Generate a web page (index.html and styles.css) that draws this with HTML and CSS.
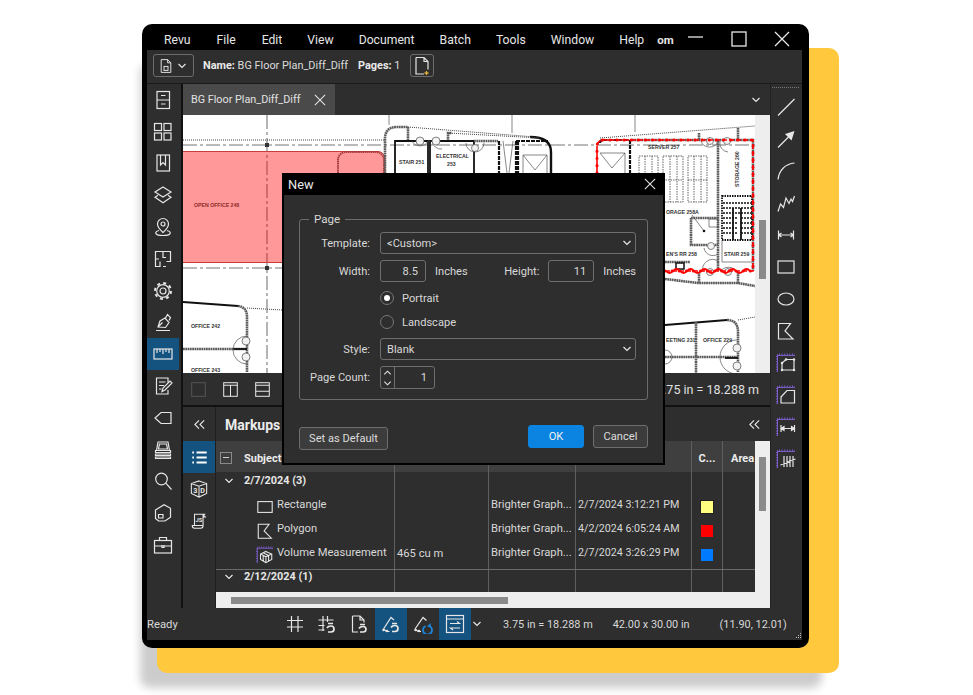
FILE: index.html
```html
<!DOCTYPE html>
<html lang="en">
<head>
<meta charset="utf-8">
<title>Revu - New document</title>
<link rel="stylesheet" href="styles.css">
</head>
<body>
<svg class="defs" width="0" height="0" aria-hidden="true">
  <symbol id="i-cabinet" viewBox="0 0 20 20"><rect x="4" y="1.500" width="12.500" height="17"/><path d="M4 10h12.500M8 5.500h4.500M8 14h4.500"/></symbol>
  <symbol id="i-grid4" viewBox="0 0 20 20"><rect x="1.500" y="1.500" width="7" height="7"/><rect x="11" y="1.500" width="7" height="7"/><rect x="1.500" y="11" width="7" height="7"/><rect x="11" y="11" width="7" height="7"/></symbol>
  <symbol id="i-book" viewBox="0 0 20 20"><rect x="4" y="2" width="12.500" height="16"/><path d="M7.500 2v10l2.500-2.500 2.500 2.500V2"/></symbol>
  <symbol id="i-layers" viewBox="0 0 20 20"><path d="M10 2l8 5-8 5-8-5z"/><path d="M5 10.200L2 12.200l8 5.500 8-5.500-3-2"/></symbol>
  <symbol id="i-pin" viewBox="0 0 20 20"><path d="M10 1.500A5.500 5.500 0 0 1 15.500 7c0 3.500-5.500 8.500-5.500 8.500S4.500 10.500 4.500 7A5.500 5.500 0 0 1 10 1.500z"/><circle cx="10" cy="7" r="2"/><path d="M6 13.500c-5.500 1.500-4 5 4 5s9.500-3.500 4-5"/></symbol>
  <symbol id="i-floor" viewBox="0 0 20 20"><path d="M10 2.500H2.500v15H7v-5M2.500 10H6M10 2.500h7.500v10h-4M10 2.500v6h3M10 17.500h3"/></symbol>
  <symbol id="i-gear" viewBox="0 0 20 20"><circle cx="10" cy="10" r="6.300"/><circle cx="10" cy="10" r="3"/><circle class="teeth" cx="10" cy="10" r="8"/></symbol>
  <symbol id="i-pen" viewBox="0 0 20 20"><path d="M3 18.500h14M5 15l2-6 5-3 4 4.500-3.500 5zM5 15l4.500-4.500M12.500 6l2-3.500 3 3-1.500 3"/></symbol>
  <symbol id="i-ruler" viewBox="0 0 20 20"><rect x="1" y="5" width="18" height="10"/><path d="M4 5v4M7 5v3M10 5v5M13 5v3M16 5v4"/></symbol>
  <symbol id="i-note" viewBox="0 0 20 20"><path d="M15 6.500V2H3.500v16H15v-4M6 6h6.500M6 9.500h5M6 13h2.500M9 15.500l1-3.500 7-7 2 2-7 7z"/></symbol>
  <symbol id="i-tag" viewBox="0 0 20 20"><path d="M18 4.500H8L2 10l6 5.500h10z"/></symbol>
  <symbol id="i-tray" viewBox="0 0 20 20"><path d="M3.500 10.500L5 2h10l1.500 8.500M6.500 4h7l1 5h-9zM2.500 10.500h15v2h-15zM2.500 14h15v1.500h-15zM2.500 17h15v1.500h-15z"/></symbol>
  <symbol id="i-search" viewBox="0 0 20 20"><circle cx="8.500" cy="8" r="5.800"/><path d="M12.800 12.200L18.500 18.500"/></symbol>
  <symbol id="i-house" viewBox="0 0 20 20"><path d="M2.500 7L11 1.800l6.500 3.500v9L12 18H5.500l-3-2.500zM5.500 15v-3.500H10V15z"/></symbol>
  <symbol id="i-case" viewBox="0 0 20 20"><rect x="1.500" y="5.500" width="17" height="12.500"/><path d="M6.500 5.500V2.500h7v3M1.500 11h17M9 10v2.500h2V10"/></symbol>

  <symbol id="t-line" viewBox="0 0 20 20"><path d="M2 18.500L18.500 2"/></symbol>
  <symbol id="t-arrow" viewBox="0 0 20 20"><path d="M2 18.500L15 5.500"/><path class="fillhead" d="M18.500 2l-3 9.500-6.500-6.500z"/></symbol>
  <symbol id="t-arc" viewBox="0 0 20 20"><path d="M2 18.500C3 9.500 9 3 18.500 2"/></symbol>
  <symbol id="t-zig" viewBox="0 0 20 20"><path d="M2 18.500l2.500-7.500 3 3.500L10 5l3 5.500L15 6l1.500 2.500L18.500 3"/></symbol>
  <symbol id="t-dim" viewBox="0 0 20 20"><path d="M2.500 5.500v9M17.500 5.500v9M2.500 10h15M2.500 10l3-2M2.500 10l3 2M17.500 10l-3-2M17.500 10l-3 2"/></symbol>
  <symbol id="t-rect" viewBox="0 0 20 20"><rect x="2" y="4" width="16" height="12"/></symbol>
  <symbol id="t-ellipse" viewBox="0 0 20 20"><ellipse cx="10" cy="10" rx="8" ry="6"/></symbol>
  <symbol id="t-poly" viewBox="0 0 20 20"><path d="M2.500 2.500h12L9 10l8 8H2.500z"/></symbol>
  <symbol id="t-mpoly" viewBox="0 0 20 20"><path class="violet" d="M1.500 1v18M1.500 2.500H19"/><path class="ticks" d="M3 1.500H19M.8 3v16"/><path d="M6 10l4-3.500h8V17H6z"/><path class="nodes" d="M6 10v.01M10 6.500v.01M18 6.500v.01M18 17v.01M6 17v.01"/></symbol>
  <symbol id="t-marea" viewBox="0 0 20 20"><path class="violet" d="M1.500 1v18M1.500 2.500H19"/><path class="ticks" d="M3 1.500H19M.8 3v16"/><path d="M5 12l6-6.500h7.500V18H5z"/></symbol>
  <symbol id="t-mlen" viewBox="0 0 20 20"><path class="violet" d="M1.500 1v18M1.500 2.500H19"/><path class="ticks" d="M3 1.500H19M.8 3v16"/><path d="M5 8v7M18.500 8v7M5 11.500h13.500M5 11.500l3-2v4zM18.500 11.500l-3-2v4z"/></symbol>
  <symbol id="t-mtally" viewBox="0 0 20 20"><path class="violet" d="M1.500 1v18M1.500 2.500H19"/><path class="ticks" d="M3 1.500H19M.8 3v16"/><path d="M8 7v11M11 7v11M14 7v11M17 7v11M4.500 16l15-6"/></symbol>

  <symbol id="p-cube" viewBox="0 0 20 20"><path d="M10 1L18.500 4v11L10 19 1.500 15V4zM1.500 4L10 7l8.500-3M10 7v12"/></symbol>
  <symbol id="p-list" viewBox="0 0 20 20"><path class="thicker" d="M6.500 4H18.500M6.500 10H18.500M6.500 16H18.500"/><path class="thicker" d="M1.500 4h2M1.500 10h2M1.500 16h2"/></symbol>
  <symbol id="p-script" viewBox="0 0 20 20"><path d="M5 15V2.500h12M17 2.500c-2 0-2 3 0 3M14.500 2.500V15M5 15H2.500c0 2.500 1 3 2.500 3h7c1.500 0 2.500-.5 2.500-3zM14.500 5.500H18"/></symbol>

  <symbol id="s-grid" viewBox="0 0 20 20"><path d="M6.500 2v16M13 2v16M2 6.500h16M2 13h16"/></symbol>
  <symbol id="s-gridu" viewBox="0 0 20 20"><path d="M6 2v15M10.500 2v6M1.500 6h15M1.500 11.500h6M1.500 16h6"/><path class="thick" d="M11 9.500h5M10 14c1-2 2.500-2 4-2 4 0 4 6 0 6h-3"/></symbol>
  <symbol id="s-docu" viewBox="0 0 20 20"><path d="M3.500 2H11l4 4v2.500M3.500 2v16H9M11 2v4h4"/><path class="thick" d="M11 10.500h5M10 14.500c1-2 2.500-2 4-2 4 0 4 5.500 0 5.500h-3"/></symbol>
  <symbol id="s-penu" viewBox="0 0 20 20"><path d="M2.500 15L10 3.500l3 2.500M2.500 15l3 2.500h3"/><path class="nodes" d="M2.500 16v.01M6 17v.01"/><path class="thick" d="M11 9.500h5M10 13.500c1-2 2.500-2 4-2 4 0 4 6 0 6h-3"/></symbol>
  <symbol id="s-penr" viewBox="0 0 20 20"><path d="M2 15L10 3.500l3.500 3M2 15l3 2.500h3"/><path class="nodes" d="M2.500 16v.01M6 17v.01"/><path class="bluearc" d="M16.500 12a4.500 4.500 0 1 1-4 0"/><path class="bluehead" d="M17.500 9l.5 4.500-4-1z"/></symbol>
  <symbol id="s-swap" viewBox="0 0 20 20"><rect x="1.500" y="1.500" width="17" height="17"/><path d="M1.500 5h17M5 9.500h9.500l-2.500-2M15 14H5.500l2.500 2"/></symbol>

  <symbol id="c-down" viewBox="0 0 10 10"><path d="M1.500 3L5 6.500 8.500 3"/></symbol>
  <symbol id="c-up" viewBox="0 0 10 10"><path d="M1.500 7L5 3.500 8.500 7"/></symbol>
  <symbol id="c-close" viewBox="0 0 14 14"><path d="M1 1l12 12M13 1L1 13"/></symbol>
  <symbol id="c-back" viewBox="0 0 14 14"><path d="M6.500 2.500L2 7l4.500 4.500M12 2.500L7.500 7l4.500 4.500"/></symbol>
</svg>

<main class="stage">
  <div class="backplate"></div>
  <section class="window">
    <header class="titlebar">
      <nav class="menu">
        <span>Revu</span><span class="menu-shift">File</span><span class="menu-shift">Edit</span><span>View</span><span>Document</span><span>Batch</span><span>Tools</span><span>Window</span><span class="menu-help">Help</span><span class="menu-om">om</span>
      </nav>
      <div class="winctrls">
        <svg class="ctl" viewBox="0 0 16 16"><path d="M0 6h15"/></svg>
        <svg class="ctl" viewBox="0 0 16 16"><rect x="1" y="1" width="14" height="14"/></svg>
        <svg class="ctl" viewBox="0 0 16 16"><path d="M1 1l14 14M15 1L1 15"/></svg>
      </div>
    </header>

    <div class="toolbar">
      <button class="tbtn tbtn-drop">
        <svg class="ico i16" viewBox="0 0 20 20"><path d="M4 2h8l4 4v12H4zM12 2v4h4"/><rect x="7.500" y="10.500" width="5" height="5"/></svg>
        <svg class="ico i10"><use href="#c-down"/></svg>
      </button>
      <span class="docinfo"><b>Name:</b> BG Floor Plan_Diff_Diff</span>
      <span class="docinfo pages"><b>Pages:</b> 1</span>
      <button class="tbtn tbtn-new">
        <svg class="ico i20" viewBox="0 0 20 20"><path d="M4 1.500h8l4 4v8M4 1.500V18h8M12 1.500v4h4"/><path class="plus" d="M14.500 15v4M12.500 17h4"/></svg>
      </button>
    </div>

    <div class="main">
      <aside class="rail">
        <span class="rail-item"><svg class="ico"><use href="#i-cabinet"/></svg></span>
        <span class="rail-item"><svg class="ico"><use href="#i-grid4"/></svg></span>
        <span class="rail-item"><svg class="ico"><use href="#i-book"/></svg></span>
        <span class="rail-item"><svg class="ico"><use href="#i-layers"/></svg></span>
        <span class="rail-item"><svg class="ico"><use href="#i-pin"/></svg></span>
        <span class="rail-item"><svg class="ico"><use href="#i-floor"/></svg></span>
        <span class="rail-item"><svg class="ico"><use href="#i-gear"/></svg></span>
        <span class="rail-item"><svg class="ico"><use href="#i-pen"/></svg></span>
        <span class="rail-item is-active"><svg class="ico"><use href="#i-ruler"/></svg></span>
        <span class="rail-item"><svg class="ico"><use href="#i-note"/></svg></span>
        <span class="rail-item"><svg class="ico"><use href="#i-tag"/></svg></span>
        <span class="rail-item"><svg class="ico"><use href="#i-tray"/></svg></span>
        <span class="rail-item"><svg class="ico"><use href="#i-search"/></svg></span>
        <span class="rail-item"><svg class="ico"><use href="#i-house"/></svg></span>
        <span class="rail-item"><svg class="ico"><use href="#i-case"/></svg></span>
      </aside>

      <div class="center">
        <div class="tabbar">
          <div class="tab">BG Floor Plan_Diff_Diff <svg class="ico tabx"><use href="#c-close"/></svg></div>
          <svg class="ico i10 tabmore"><use href="#c-down"/></svg>
        </div>

        <div class="viewer">
          <svg class="plan" viewBox="183 115 572 258" width="572" height="258">
            <rect x="183" y="115" width="572" height="258" fill="#fff"/>
            <g class="grid-l">
              <path d="M267 115V373"/>
              <path d="M183 145H755"/>
              <path d="M183 268H282"/>
            </g>
            <path class="thin" d="M389 115v10M512 115v18M635 115v17"/>
            <path class="dots" d="M183 140H385M247 308L282 310"/>
            <rect x="265" y="143" width="4" height="4" fill="#333"/>
            <rect x="265" y="266" width="4" height="4" fill="#333"/>
            <path class="pink" d="M183 152H377a8 8 0 0 1 8 8V262H183z"/>
            <path class="pinkline" d="M183 151.500H378a7 7 0 0 1 7 7V173M183 262.500H282"/>
            <path class="pinkwall" d="M338 173V160a8 8 0 0 1 8-8H376a8 8 0 0 1 8 8V173"/>
            <text class="lbl pinklbl" x="194" y="207">OPEN OFFICE 248</text>

            <path class="wall" d="M385 173V139Q385 127 397 127H408V141M448 141V133H452"/>
            <path class="dots" d="M408 127L535 137"/>
            <path class="wallb" d="M530 137Q551 137 551 152V173"/>
            <path class="dots" d="M448 133L540 138"/>
            <path class="blk" d="M395 173V141H428V173M430 173V141H474V173"/>
            <path class="wall" d="M474 141H498"/>
            <path class="blk2" d="M499 141V173M516 141V173M518 141V173M516 141H548"/>
            <path class="thin" d="M503 141L507 173M513 141L509 173M523 155H547V173M523 155V173M523 155L535 170M547 155L535 170"/>
            <path class="thin" d="M412 141a9 9 0 0 0 16 0M432 141a9 9 0 0 0 10 8M466 143a9 9 0 0 0 18 0"/>
            <circle class="door" cx="420" cy="141" r="4"/><circle class="door" cx="436" cy="141" r="4"/><circle class="door" cx="475" cy="148" r="3.500"/>
            <text class="lbl" x="399" y="164">STAIR 251</text>
            <text class="lbl" x="436" y="158">ELECTRICAL</text>
            <text class="lbl" x="447" y="166">253</text>

            <path class="dots" d="M600 138L755 126"/>
            <path class="wall" d="M699 133V139M738 128V139"/>
            <path class="blk2" d="M600 143Q600 140 604 140H629M630 140V173"/>
            <path class="thin" d="M600 153H625V173M600 153L612 168M625 153L612 168"/>
            <path class="wall" d="M632 140H753V271M718 141V262M691 218H718M691 218V245H718"/>
            <path class="dotbox" d="M639 156h19v46h-19zM645 156v46M652 156v46M639 180h19M663 156h20v46h-20zM670 156v46M677 156v46M663 180h20M688 156h19v46h-19zM694 156v46M701 156v46M688 180h19"/>
            <text class="lbl" x="648" y="149">SERVER 257</text>
            <text class="lbl" x="666" y="214">ORAGE 258A</text>
            <text class="lbl" x="666" y="256">EN'S RR 258</text>
            <text class="lbl" x="724" y="256">STAIR 259</text>
            <text class="lbl" transform="translate(739 187) rotate(-90)">STORAGE 260</text>
            <path class="thin" d="M701 141a9 9 0 0 0 17 0M720 141a9 9 0 0 0 8 11"/>
            <circle class="door" cx="710" cy="141" r="3.500"/><circle class="door" cx="727" cy="141" r="3.500"/>
            <path class="stairbox" d="M722 196H752V240H722z"/>
            <path class="treads" d="M723 203h29M723 208h29M723 213h29M723 218h14M723 223h14M723 228h14M723 233h14M741 218h11M741 223h11M741 228h11M741 233h11"/>
            <path class="blk" d="M733 208V240M741 208V240"/>
            <path class="thin" d="M722 240V262H752M692 215L704 231M709 219h9v8h-9z"/>
            <circle cx="704" cy="231" r="1.300" fill="#111"/>
            <path class="wall" d="M718 262V271M665 262H690"/>
            <rect x="676" y="263" width="8" height="6" class="office-box"/>
            <path class="thin" d="M703 272a10 10 0 0 1 15 -11M720 272a10 10 0 0 1 17 0M704 248a9 9 0 0 0 14 6"/>
            <circle class="door" cx="711" cy="246" r="3.500"/><circle class="door" cx="710" cy="272" r="3.500"/><circle class="door" cx="728" cy="272" r="3.500"/>
            <path class="wall" d="M665 279L698 283H738L755 286M699 272V283M738 272V284"/>
            <path class="cloud-line" d="M665 271H753V140H604Q597 140 597 147V173"/>
            <path class="cloud-dots" d="M665 271H753V140H604Q597 140 597 147V173"/>
            <path class="cloud-arcs" d="M666 271q3.500 4 7 0t7 0t7 0t7 0t7 0t7 0t7 0t7 0t7 0t7 0t7 0t7 0"/>

            <path class="blk" d="M665 325L727 320"/>
            <path class="wall" d="M727 320Q738 320 738 332V372M665 357H738M696 322V373"/>
            <path class="dots" d="M738 320L755 317"/>
            <path class="blk" d="M725 358H738"/>
            <path class="thin" d="M737 340a17 17 0 0 0 0 34"/>
            <circle class="door" cx="737" cy="348" r="4"/><circle class="door" cx="737" cy="366" r="4"/>
            <text class="lbl" x="666" y="342">EETING 231</text>
            <text class="lbl" x="703" y="342">OFFICE 229</text>
            <path class="thin" d="M665 350a6 6 0 0 1 0 14"/>

            <path class="blk" d="M183 302L238 306"/>
            <path class="wall" d="M238 306Q247 307 247 317V372"/>
            <path class="wall" d="M183 349H247"/>
            <path class="blk" d="M233 349H247"/>
            <path class="thin" d="M247 336a14 14 0 0 0 0 28"/>
            <circle class="door" cx="246" cy="341" r="4"/><circle class="door" cx="246" cy="357" r="4"/>
            <text class="lbl" x="191" y="328">OFFICE 242</text>
            <text class="lbl" x="191" y="372">OFFICE 243</text>
          </svg>
          <div class="vscroll"><span class="vthumb vthumb-plan"></span></div>
        </div>

        <div class="viewbar">
          <div class="viewbar-icons">
            <svg class="ico i17 dim" viewBox="0 0 20 20"><rect x="2" y="2" width="16" height="16"/></svg>
            <svg class="ico i17" viewBox="0 0 20 20"><rect x="2" y="2" width="16" height="16"/><path d="M2 5h16M10 5v13"/></svg>
            <svg class="ico i17" viewBox="0 0 20 20"><rect x="2" y="2" width="16" height="16"/><path d="M2 5h16M2 12h16"/></svg>
          </div>
          <span class="scale">3.75 in = 18.288 m</span>
        </div>

        <div class="panel">
          <div class="panel-side">
            <span class="side-top"><svg class="ico i13"><use href="#c-back"/></svg></span>
            <span class="side-item is-active"><svg class="ico i17"><use href="#p-list"/></svg></span>
            <span class="side-item">
              <svg class="ico i18" viewBox="0 0 20 20"><use href="#p-cube"/><text class="icontext" x="3.500" y="14.500">3</text><text class="icontext" x="11.500" y="14.500">D</text></svg>
            </span>
            <span class="side-item">
              <svg class="ico i18" viewBox="0 0 20 20"><use href="#p-script"/><text class="icontext small" x="6" y="11.500">JS</text></svg>
            </span>
          </div>
          <div class="panel-main">
            <div class="panel-head">
              <span class="panel-title">Markups</span>
              <svg class="ico i13"><use href="#c-back"/></svg>
            </div>
            <div class="table-area">
              <div class="table-and-v">
                <div class="table">
                  <div class="trow thead">
                    <div class="cell cell-subject"><span class="minus"></span><b>Subject</b></div>
                    <div class="cell"></div><div class="cell"></div><div class="cell"></div>
                    <div class="cell center-t"><b>C...</b></div>
                    <div class="cell cell-last"><b>Area</b></div>
                  </div>
                  <div class="trow tgroup">
                    <div class="cell cell-group"><svg class="ico i10"><use href="#c-down"/></svg><b>2/7/2024 (3)</b></div>
                    <div class="cell"></div><div class="cell"></div><div class="cell"></div><div class="cell"></div><div class="cell cell-last"></div>
                  </div>
                  <div class="trow titem">
                    <div class="cell cell-name"><svg class="ico i18"><use href="#t-rect"/></svg><span>Rectangle</span></div>
                    <div class="cell"></div>
                    <div class="cell">Brighter Graph...</div>
                    <div class="cell cell-date">2/7/2024 3:12:21 PM</div>
                    <div class="cell center-t"><span class="swatch swatch-yellow"></span></div>
                    <div class="cell cell-last"></div>
                  </div>
                  <div class="trow titem">
                    <div class="cell cell-name"><svg class="ico i18"><use href="#t-poly"/></svg><span>Polygon</span></div>
                    <div class="cell"></div>
                    <div class="cell">Brighter Graph...</div>
                    <div class="cell cell-date">4/2/2024 6:05:24 AM</div>
                    <div class="cell center-t"><span class="swatch swatch-red"></span></div>
                    <div class="cell cell-last"></div>
                  </div>
                  <div class="trow titem">
                    <div class="cell cell-name">
                      <svg class="ico i18" viewBox="0 0 20 20"><path class="violet" d="M1.500 1v18M1.500 2.500H19"/><path class="ticks" d="M3 1.500H19M.8 3v16"/><path d="M11 6l6.500 3v6L11 18.500 5 15V9zM5 9l6 3 6.500-3M11 12v6.500M8 7.500l6 3M8 16.800V10.500M14 16.800v-6"/></svg>
                      <span>Volume Measurement</span>
                    </div>
                    <div class="cell cell-value">465 cu m</div>
                    <div class="cell">Brighter Graph...</div>
                    <div class="cell cell-date">2/7/2024 3:26:29 PM</div>
                    <div class="cell center-t"><span class="swatch swatch-blue"></span></div>
                    <div class="cell cell-last"></div>
                  </div>
                  <div class="trow tspacer">
                    <div class="cell"></div><div class="cell"></div><div class="cell"></div><div class="cell"></div><div class="cell"></div><div class="cell cell-last"></div>
                  </div>
                  <div class="trow tgroup tgroup-last">
                    <div class="cell cell-group"><svg class="ico i10"><use href="#c-down"/></svg><b>2/12/2024 (1)</b></div>
                    <div class="cell"></div><div class="cell"></div><div class="cell"></div><div class="cell"></div><div class="cell cell-last"></div>
                  </div>
                </div>
                <div class="vscroll vscroll-table"><span class="vthumb vthumb-table"></span></div>
              </div>
              <div class="hscroll"><span class="hthumb"></span></div>
            </div>
          </div>
        </div>
      </div>

      <aside class="tools">
        <span class="tools-grip"></span>
        <span class="tool"><svg class="ico"><use href="#t-line"/></svg></span>
        <span class="tool"><svg class="ico"><use href="#t-arrow"/></svg></span>
        <span class="tool"><svg class="ico"><use href="#t-arc"/></svg></span>
        <span class="tool"><svg class="ico"><use href="#t-zig"/></svg></span>
        <span class="tool"><svg class="ico"><use href="#t-dim"/></svg></span>
        <span class="tool"><svg class="ico"><use href="#t-rect"/></svg></span>
        <span class="tool"><svg class="ico"><use href="#t-ellipse"/></svg></span>
        <span class="tool"><svg class="ico"><use href="#t-poly"/></svg></span>
        <span class="tool"><svg class="ico"><use href="#t-mpoly"/></svg></span>
        <span class="tool"><svg class="ico"><use href="#t-marea"/></svg></span>
        <span class="tool"><svg class="ico"><use href="#t-mlen"/></svg></span>
        <span class="tool"><svg class="ico"><use href="#t-mtally"/></svg></span>
      </aside>
    </div>

    <footer class="status">
      <span class="ready">Ready</span>
      <div class="status-tools">
        <span class="st"><svg class="ico"><use href="#s-grid"/></svg></span>
        <span class="st"><svg class="ico"><use href="#s-gridu"/></svg></span>
        <span class="st"><svg class="ico"><use href="#s-docu"/></svg></span>
        <span class="st is-active"><svg class="ico"><use href="#s-penu"/></svg></span>
        <span class="st"><svg class="ico"><use href="#s-penr"/></svg></span>
        <span class="st is-active"><svg class="ico"><use href="#s-swap"/></svg></span>
        <svg class="ico i10 st-more"><use href="#c-down"/></svg>
      </div>
      <span class="stat stat-scale">3.75 in = 18.288 m</span>
      <span class="stat stat-size">42.00 x 30.00 in</span>
      <span class="stat stat-pos">(11.90, 12.01)</span>
      <svg class="grip" viewBox="0 0 8 8"><path d="M6 1h1v1H6zM4 3h1v1H4zM6 3h1v1H6zM2 5h1v1H2zM4 5h1v1H4zM6 5h1v1H6z"/></svg>
    </footer>

    <div class="dialog" role="dialog">
      <div class="dlg-title"><span>New</span><svg class="ico dlg-x"><use href="#c-close"/></svg></div>
      <div class="dlg-body">
        <div class="group">
          <span class="legend">Page</span>
          <div class="row">
            <label class="lab">Template:</label>
            <div class="select"><span>&lt;Custom&gt;</span><svg class="ico i10"><use href="#c-down"/></svg></div>
          </div>
          <div class="row">
            <label class="lab">Width:</label>
            <div class="input">8.5</div>
            <span class="unit">Inches</span>
            <label class="lab lab-h">Height:</label>
            <div class="input">11</div>
            <span class="unit">Inches</span>
          </div>
          <div class="row radio-row radio-first">
            <span class="radio is-on"></span><span>Portrait</span>
          </div>
          <div class="row radio-row radio-second">
            <span class="radio"></span><span>Landscape</span>
          </div>
          <div class="row">
            <label class="lab">Style:</label>
            <div class="select"><span>Blank</span><svg class="ico i10"><use href="#c-down"/></svg></div>
          </div>
          <div class="row row-last">
            <label class="lab">Page Count:</label>
            <div class="spin">
              <div class="spin-btns">
                <svg class="ico"><use href="#c-up"/></svg>
                <svg class="ico"><use href="#c-down"/></svg>
              </div>
              <span class="spin-val">1</span>
            </div>
          </div>
        </div>
        <div class="dlg-foot">
          <button class="btn btn-default">Set as Default</button>
          <button class="btn btn-ok">OK</button>
          <button class="btn btn-cancel">Cancel</button>
        </div>
      </div>
    </div>
  </section>
</main>
</body>
</html>
```

FILE: styles.css
```css
* { box-sizing: border-box; }
html, body { margin: 0; padding: 0; background: #fff; }
body { font-family: Roboto, "Liberation Sans", sans-serif; font-size: 11.200px; color: #dcdcdc; overflow: hidden; }
.defs { position: absolute; }
.stage { position: relative; width: 973px; height: 695px; padding: 24px 0 0 142px; }
.backplate {
  position: absolute; left: 157px; top: 48px; width: 682px; height: 625px;
  background: #ffc83d; border-radius: 10px;
  box-shadow: -17px 15px 8px rgba(0,0,0,.2);
}

/* icons */
.ico { width: 20px; height: 20px; fill: none; stroke: #e6e6e6; stroke-width: 1.200; display: block; flex: none; }
.i10 { width: 10px; height: 10px; }
.i13 { width: 13px; height: 13px; }
.i16 { width: 16px; height: 16px; }
.i17 { width: 17px; height: 17px; }
.i18 { width: 18px; height: 18px; }
.i20 { width: 20px; height: 20px; }
.dim { stroke: #555; }
.teeth { stroke-width: 2; stroke-dasharray: 3 3.280; }
.fillhead { fill: #e6e6e6; stroke: none; }
.thick { stroke-width: 1.700; }
.thicker { stroke-width: 2.300; stroke: #fff; }
.nodes { stroke-width: 2.500; stroke-linecap: round; }
.violet { stroke: #7a5cc8; stroke-width: 1; }
.ticks { stroke: #7a5cc8; stroke-width: 2; stroke-dasharray: 1 1.600; }
.plus { stroke: #e0b23a; stroke-width: 1.300; }
.bluearc { stroke: #1c86dc; stroke-width: 1.800; }
.bluehead { fill: #1c86dc; stroke: none; }
.icontext { font: 700 8px Roboto, sans-serif; fill: #e6e6e6; stroke: none; }
.icontext.small { font-size: 6.500px; }

/* window */
.window {
  position: relative; width: 667px; height: 624px;
  background: #000; border-radius: 10px; padding: 0 7px 8px 5px;
  display: flex; flex-direction: column;
}
.titlebar { height: 26px; display: flex; align-items: center; justify-content: space-between; flex: none; }
.menu { display: flex; padding-left: 17px; gap: 25px; font-size: 12.200px; color: #e6e6e6; padding-top: 5px; }
.menu-shift { margin-left: 1px; }
.menu-om { margin-left: -12px; font-weight: 700; font-size: 11.500px; }
.winctrls { display: flex; gap: 27px; margin-right: 12px; margin-top: 4px; }
.ctl { width: 16px; height: 16px; fill: none; stroke: #e8e8e8; stroke-width: 1.300; display: block; }

.toolbar {
  height: 34px; flex: none; background: #2e2e2e; border-bottom: 1px solid #1a1a1a;
  display: flex; align-items: center; padding: 0 0 2px 6px; font-size: 10.900px;
}
.tbtn { background: transparent; border: 1px solid #6c6c6c; border-radius: 3px; height: 23px; padding: 0; display: flex; align-items: center; }
.tbtn-drop { width: 41px; justify-content: space-between; padding: 0 6px 0 4px; }
.tbtn-new { width: 24px; justify-content: center; margin-left: 10px; }
.docinfo { margin-left: 9px; white-space: nowrap; color: #dcdcdc; }
.docinfo b { color: #eaeaea; }
.pages { margin-left: 10px; }

.main { flex: none; height: 524px; display: flex; background: #2e2e2e; }
.rail { width: 36px; flex: none; border-right: 2px solid #111; display: flex; flex-direction: column; }
.rail-item { height: 31.800px; width: 32px; display: flex; align-items: center; justify-content: center; }
.rail-item.is-active { background: #14527f; }

.center { width: 587px; flex: none; display: flex; flex-direction: column; }
.tabbar { height: 31px; flex: none; display: flex; align-items: center; justify-content: space-between; padding-right: 9px; }
.tab {
  width: 152px; height: 31px; background: #4a4a4a; display: flex; align-items: center;
  justify-content: space-between; padding: 0 9px 0 8px; font-size: 10.800px; color: #e2e2e2; white-space: nowrap;
}
.tabx { width: 12px; height: 12px; }

.viewer { height: 258px; flex: none; display: flex; }
.plan { display: block; flex: none; }
.vscroll { width: 15px; flex: none; background: #eeeeee; position: relative; }
.vthumb { position: absolute; left: 4px; width: 7px; background: #8a8a8a; }
.vthumb-plan { top: 105px; height: 59px; }
.vthumb-table { top: 16px; height: 54px; }

/* plan drawing */
.plan .grid-l path { fill: none; stroke: #777; stroke-width: 1.100; stroke-dasharray: 14 3 3 3; }
.plan .thin { fill: none; stroke: #555; stroke-width: .7; }
.plan .dots { fill: none; stroke: #444; stroke-width: 1; stroke-dasharray: 1 1; }
.plan .pink { fill: #ff0000; fill-opacity: .4; }
.plan .pinkline { fill: none; stroke: #c83c3c; stroke-width: 1; }
.plan .pinkwall { fill: none; stroke: #a83a3a; stroke-width: 2; stroke-dasharray: 1.500 .6; }
.plan .wall { fill: none; stroke: #5c5c5c; stroke-width: 2.600; stroke-dasharray: 1.800 .5; }
.plan .wallb { fill: none; stroke: #111; stroke-width: 2.400; }
.plan .blk { fill: none; stroke: #111; stroke-width: 1.800; }
.plan .blk2 { fill: none; stroke: #111; stroke-width: 2.200; stroke-dasharray: 4 1; }
.plan .door { fill: #f2f2f2; stroke: #666; stroke-width: .8; }
.plan .dotbox { fill: none; stroke: #555; stroke-width: .9; stroke-dasharray: 1.500 1; }
.plan .stairbox { fill: none; stroke: #111; stroke-width: 1.800; stroke-dasharray: 1.500 1; }
.plan .treads { fill: none; stroke: #111; stroke-width: 1.600; stroke-dasharray: 2 1; }
.plan .office-box { fill: #fff; stroke: #111; stroke-width: 1.500; }
.plan .cloud-line { fill: none; stroke: #ff0000; stroke-width: 1.600; stroke-dasharray: 5 2; }
.plan .cloud-dots { fill: none; stroke: #ff0000; stroke-width: 3; stroke-linecap: round; stroke-dasharray: .1 7; }
.plan .cloud-arcs { fill: none; stroke: #ff0000; stroke-width: 1.800; }
.plan .lbl { font: 700 5.200px "Liberation Sans", Arial, sans-serif; fill: #333; }
.plan .pinklbl { fill: #8f2a2a; }

.viewbar {
  height: 32px; flex: none; display: flex; align-items: center; justify-content: space-between;
  padding: 0 11px 0 7px; background: #2e2e2e; font-size: 12.500px;
}
.viewbar-icons { display: flex; gap: 15px; }
.scale { color: #e0e0e0; }

.panel { flex: 1; display: flex; border-top: 2px solid #111; min-height: 0; }
.panel-side { width: 33px; flex: none; display: flex; flex-direction: column; border-right: 1px solid #1e1e1e; }
.side-top { height: 34px; display: flex; align-items: center; justify-content: center; }
.side-item { height: 32px; display: flex; align-items: center; justify-content: center; }
.side-item.is-active { background: #14527f; }
.panel-main { flex: 1; display: flex; flex-direction: column; min-width: 0; }
.panel-head { height: 34px; flex: none; display: flex; align-items: center; justify-content: space-between; padding: 1px 9px 0; }
.panel-title { font-weight: 700; font-size: 14px; color: #ececec; }
.table-area { flex: 1; display: flex; flex-direction: column; background: #eee; min-height: 0; }
.table-and-v { height: 151px; flex: none; display: flex; }
.table { width: 539px; flex: none; background: #2e2e2e; overflow: hidden; }
.vscroll-table { flex: 1; }
.trow { display: grid; grid-template-columns: 179px 94px 87px 116px 31px 32px; }
.thead { height: 31px; background: #3f3f3f; }
.tgroup { height: 20px; }
.tgroup-last { height: 22px; }
.titem { height: 24px; }
.tspacer { height: 6px; border-bottom: 1px solid #6a6a6a; }
.cell { border-right: 1px solid #5f5f5f; display: flex; align-items: center; padding-left: 2px; white-space: nowrap; overflow: hidden; font-size: 11.200px; color: #d8d8d8; min-width: 0; }
.cell-date { font-size: 10.700px; }
.cell-last { border-right: 0; padding-left: 8px; }
.center-t { justify-content: center; padding-left: 0; }
.thead .cell { padding-top: 3px; font-size: 11px; }
.thead .cell-last { padding-left: 8px; }
.thead b { color: #ececec; }
.thead .cell-subject { padding-left: 4px; gap: 12px; }
.minus { width: 12px; height: 12px; border: 1px solid #8a8a8a; position: relative; flex: none; }
.minus::after { content: ""; position: absolute; left: 2px; right: 2px; top: 4px; height: 1px; background: #ccc; }
.cell-group { padding-left: 8px; gap: 10px; align-items: flex-start; padding-top: 2px; font-size: 10.900px; }
.cell-group b { color: #e6e6e6; }
.cell-group svg { margin-top: 2px; }
.tgroup-last .cell-group { padding-top: 0; }
.cell-name { padding-left: 40px; gap: 3px; }
.cell-name svg { margin-top: 6px; }
.cell-value { padding-top: 2px; }
.swatch { width: 12px; height: 12px; margin-top: 6px; display: block; }
.swatch-yellow { background: #ffff80; box-shadow: 0 0 0 1px #222; }
.swatch-red { background: #ff0000; }
.swatch-blue { background: #007bff; }
.hscroll { flex: 1; position: relative; background: #eee; }
.hthumb { position: absolute; left: 15px; top: 5px; width: 277px; height: 7px; background: #8a8a8a; }

.tools { flex: 1; display: flex; flex-direction: column; align-items: center; border-left: 1px solid #222; padding: 7px 2px 0 0; position: relative; }
.tools-grip { position: absolute; left: 1px; right: 3px; top: 3px; border-top: 1px dotted #777; }
.tool { height: 32px; flex: none; display: flex; align-items: center; justify-content: center; }

.status { height: 32px; flex: none; display: flex; align-items: center; background: #2e2e2e; position: relative; font-size: 10.900px; color: #d8d8d8; }
.ready { width: 132px; flex: none; font-size: 11.300px; }
.status-tools { display: flex; align-items: center; flex: none; width: 224px; height: 32px; }
.st { width: 32px; height: 32px; display: flex; align-items: center; justify-content: center; flex: none; }
.st.is-active { background: #14527f; }
.st-more { margin-left: 1px; }
.stat { flex: none; white-space: nowrap; }
.stat-size { margin-left: 20px; }
.stat-pos { margin-left: 30px; }
.grip { position: absolute; right: 0; bottom: 0; width: 8px; height: 8px; fill: #bbb; }

/* dialog */
.dialog {
  position: absolute; left: 140px; top: 149px; width: 383px; height: 292px;
  border: 2px solid #000; background: #2e2e2e; display: flex; flex-direction: column;
}
.dlg-title { height: 20px; flex: none; background: #000; display: flex; align-items: center; justify-content: space-between; padding: 0 7px 2px 4px; font-size: 12.800px; color: #e8e8e8; }
.dlg-x { width: 12px; height: 12px; }
.dlg-body { flex: 1; padding: 24px 15px 0; }
.group { position: relative; height: 181px; border: 1px solid #6b6b6b; border-radius: 3px; padding: 12px 11px 0 0; }
.legend { position: absolute; left: 9px; top: -8px; background: #2e2e2e; padding: 0 5px; line-height: 15px; font-size: 11.600px; color: #d8d8d8; }
.row { display: flex; align-items: center; height: 22px; margin-bottom: 6px; font-size: 11.100px; color: #d8d8d8; }
.lab { width: 70px; margin-right: 10px; text-align: right; flex: none; white-space: nowrap; }
.select { flex: 1; height: 22px; border: 1px solid #6e6e6e; border-radius: 3px; display: flex; align-items: center; justify-content: space-between; padding: 0 3px 0 6px; }
.input { width: 46px; height: 22px; border: 1px solid #6e6e6e; border-radius: 3px; display: flex; align-items: center; justify-content: flex-end; padding-right: 7px; flex: none; }
.unit { margin-left: 9px; white-space: nowrap; }
.lab-h { flex: 1; margin-right: 9px; }
.radio-row { height: 24px; margin-bottom: 0; padding-left: 80px; gap: 8px; }
.radio-first { margin-top: -2px; }
.radio-second { margin-bottom: 4px; }
.radio { width: 14px; height: 14px; border-radius: 50%; border: 1px solid #777; display: block; flex: none; position: relative; }
.radio.is-on::after { content: ""; position: absolute; left: 3px; top: 3px; width: 6px; height: 6px; border-radius: 50%; background: #fff; }
.row-last { height: 23px; margin-bottom: 0; }
.spin { width: 55px; height: 23px; border: 1px solid #6e6e6e; border-radius: 3px; display: flex; }
.spin-btns { width: 14px; border-right: 1px solid #6e6e6e; display: flex; flex-direction: column; justify-content: space-between; }
.spin-btns .ico { width: 9px; height: 9px; margin: 1px 2px; }
.spin-val { flex: 1; text-align: right; padding-right: 7px; line-height: 21px; }
.dlg-foot { display: flex; align-items: flex-start; margin-top: 25px; }
.btn { font: 11.100px Roboto, "Liberation Sans", sans-serif; height: 23px; border-radius: 3px; border: 1px solid #6e6e6e; background: #3c3c3c; color: #dcdcdc; padding: 0; }
.btn-default { width: 89px; margin-top: 2px; }
.btn-ok { width: 56px; margin-left: auto; background: #0a84e0; border-color: #0a84e0; color: #f0f0f0; }
.btn-cancel { width: 55px; margin-left: 9px; }
```
